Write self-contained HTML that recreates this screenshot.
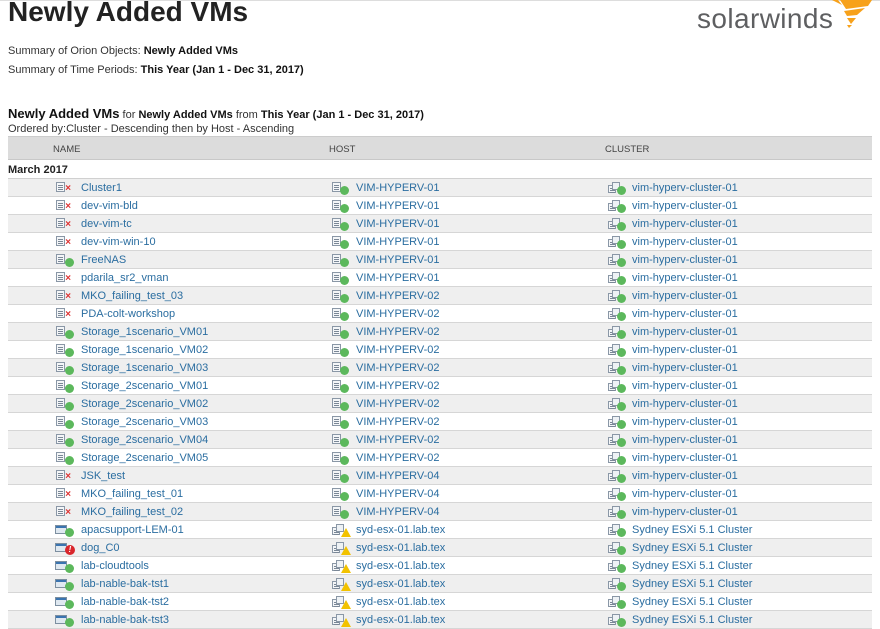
<!DOCTYPE html>
<html><head><meta charset="utf-8"><style>
*{margin:0;padding:0;box-sizing:border-box}
body{width:880px;height:626px;overflow:hidden;background:#fff;font-family:"Liberation Sans",sans-serif;color:#333;position:relative}
.a{position:absolute;white-space:nowrap}
h1{position:absolute;left:8px;top:-4px;font-size:28px;font-weight:bold;color:#222;letter-spacing:0}
.s{font-size:11px;color:#333}
.s b{color:#111}
.hdr{position:absolute;left:8px;top:136px;width:864px;height:24px;background:#dcdcdc;border-top:1px solid #ccc;border-bottom:1px solid #c8c8c8;font-size:9.5px;color:#444}
.hdr span{position:absolute;top:7px}
.row{position:absolute;left:8px;width:864px;height:18px;border-bottom:1px solid #d6d6d6;font-size:11px}
.g{background:#efefef}
.row span{position:absolute;top:3px;color:#2a6da0}
.ic{position:absolute;top:3px;width:9px;height:10px;border:1px solid #8a97a6;background:#f4f6f8}
.ic:before{content:"";position:absolute;left:1px;top:2px;width:5px;height:1px;background:#7a8796;box-shadow:0 2px 0 #7a8796,0 4px 0 #7a8796}
.vm{width:12px;height:9px;top:4px;background:#dfe8f0;border-color:#7d8fa0}
.vm:before{left:0;top:0;width:10px;height:2px;background:#3a74b0;box-shadow:none}
.cl{width:8px;height:8px;border-color:#8a97a6}
.cl:after{content:"";position:absolute;left:3px;top:-4px;width:6px;height:6px;border:1px solid #8a97a6;background:#eef2f5}
.dot{position:absolute;top:7px;width:9px;height:9px;border-radius:50%;background:#5cb85c}
.x{position:absolute;top:6px;width:8px;height:8px;color:#d33;font-size:10px;font-weight:bold;line-height:8px}
.red{background:#d9262c;color:#fff;font-size:8px;font-weight:bold;text-align:center;line-height:9px;width:10px;height:10px;top:6px}
.w{position:absolute;top:7px;width:0;height:0;border-left:5px solid transparent;border-right:5px solid transparent;border-bottom:9px solid #f2c200}
</style></head><body>
<div class="a" style="left:0;top:0;width:880px;height:1px;background:#ddd"></div>
<h1>Newly Added VMs</h1>
<div class="a" style="left:697px;top:3px;font-size:28px;color:#5e5f61;letter-spacing:0.4px">solarwinds</div>
<svg class="a" style="left:828px;top:0" width="46" height="30" viewBox="0 0 46 30">
<path d="M4 0 L14 5 L10 0Z M12 0 L44 0 L40 6 L18 9Z" fill="#f7a11a"/>
<path d="M16 11 L37 8 L29 15 L19 16Z" fill="#f7a11a"/>
<path d="M19 18 L28 18 L23 24Z" fill="#f7a11a"/>
<path d="M19 25 L24 25 L21 28Z" fill="#f7a11a"/>
</svg>
<div class="a s" style="left:8px;top:45px">Summary of Orion Objects: <b>Newly Added VMs</b></div>
<div class="a s" style="left:8px;top:64px">Summary of Time Periods: <b>This Year (Jan 1 - Dec 31, 2017)</b></div>
<div class="a" style="left:8px;top:106px;font-size:11px;color:#333"><b style="font-size:13px;color:#111">Newly Added VMs</b> for <b style="color:#111">Newly Added VMs</b> from <b style="color:#111">This Year (Jan 1 - Dec 31, 2017)</b></div>
<div class="a s" style="left:8px;top:123px">Ordered by:Cluster - Descending then by Host - Ascending</div>
<div class="hdr"><span style="left:45px">NAME</span><span style="left:321px">HOST</span><span style="left:597px">CLUSTER</span></div>
<div class="a" style="left:8px;top:164px;font-size:11px;font-weight:bold;color:#222">March 2017</div>
<div class="a" style="left:8px;top:178px;width:864px;height:1px;background:#d0d0d0"></div>
<div id="rows"></div>
<script>
var R=[["Cluster1","x","VIM-HYPERV-01"],["dev-vim-bld","x","VIM-HYPERV-01"],["dev-vim-tc","x","VIM-HYPERV-01"],["dev-vim-win-10","x","VIM-HYPERV-01"],["FreeNAS","g","VIM-HYPERV-01"],["pdarila_sr2_vman","x","VIM-HYPERV-01"],["MKO_failing_test_03","x","VIM-HYPERV-02"],["PDA-colt-workshop","x","VIM-HYPERV-02"],["Storage_1scenario_VM01","g","VIM-HYPERV-02"],["Storage_1scenario_VM02","g","VIM-HYPERV-02"],["Storage_1scenario_VM03","g","VIM-HYPERV-02"],["Storage_2scenario_VM01","g","VIM-HYPERV-02"],["Storage_2scenario_VM02","g","VIM-HYPERV-02"],["Storage_2scenario_VM03","g","VIM-HYPERV-02"],["Storage_2scenario_VM04","g","VIM-HYPERV-02"],["Storage_2scenario_VM05","g","VIM-HYPERV-02"],["JSK_test","x","VIM-HYPERV-04"],["MKO_failing_test_01","x","VIM-HYPERV-04"],["MKO_failing_test_02","x","VIM-HYPERV-04"],["apacsupport-LEM-01","vg","syd"],["dog_C0","vr","syd"],["lab-cloudtools","vg","syd"],["lab-nable-bak-tst1","vg","syd"],["lab-nable-bak-tst2","vg","syd"],["lab-nable-bak-tst3","vg","syd"]];
var h="";
R.forEach(function(r,i){
var t=179+i*18, syd=r[2]=="syd";
var st=r[1]=="x"?'<i class="x" style="left:57px">×</i>':(r[1]=="vr"?'<i class="dot red" style="left:57px">!</i>':'<i class="dot" style="left:57px"></i>');
var ni=r[1][0]=="v"?'<i class="ic vm" style="left:47px"></i>':'<i class="ic" style="left:48px"></i>';
var hi=syd?'<i class="ic cl" style="left:324px;top:6px"></i><i class="w" style="left:333px"></i>':'<i class="ic" style="left:324px"></i><i class="dot" style="left:332px"></i>';
h+='<div class="row'+(i%2==0?' g':'')+'" style="top:'+t+'px">'+ni+st+'<span style="left:73px">'+r[0]+'</span>'+hi+'<span style="left:348px">'+(syd?"syd-esx-01.lab.tex":r[2])+'</span><i class="ic cl" style="left:600px;top:6px"></i><i class="dot" style="left:609px"></i><span style="left:624px">'+(syd?"Sydney ESXi 5.1 Cluster":"vim-hyperv-cluster-01")+'</span></div>';
});
document.getElementById("rows").innerHTML=h;
</script>
</body></html>
